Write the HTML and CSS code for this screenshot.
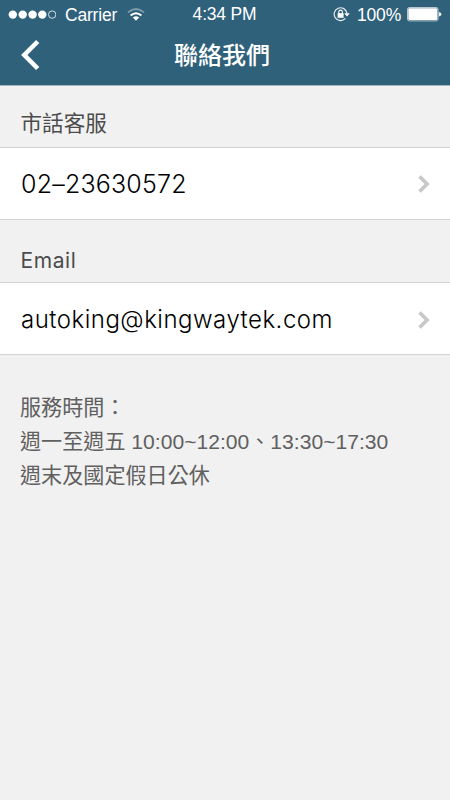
FILE: index.html
```html
<!DOCTYPE html>
<html lang="zh-Hant">
<head>
    <meta charset="UTF-8">
    <meta name="viewport" content="width=device-width, initial-scale=1.0">
    <title>聯絡我們</title>
    <link rel="stylesheet" href="styles.css">
</head>
<body>

    <header class="header">
        <div class="status-bar">
            <div class="status-left">
                <svg class="signal" width="48" height="10" viewBox="0 0 48 10">
                    <g fill="#fff">
                        <circle cx="4.8" cy="4.6" r="4.2"/>
                        <circle cx="14.7" cy="4.6" r="4.2"/>
                        <circle cx="24.6" cy="4.6" r="4.2"/>
                        <circle cx="34.3" cy="4.6" r="4.2"/>
                    </g>
                    <circle cx="44.2" cy="4.6" r="3.7" fill="none" stroke="#e4ebef" stroke-width="0.9"/>
                </svg>
                <span class="carrier">Carrier</span>
                <svg class="wifi" width="18" height="14" viewBox="0 0 18 14">
                    <path d="M1 4.4Q9-2.4 17 4.4" fill="none" stroke="#7f9eae" stroke-width="1.7"/>
                    <path d="M3.6 7.6Q9 2.8 14.4 7.6" fill="none" stroke="#fff" stroke-width="2"/>
                    <path d="M5.9 9.6Q9 7.1 12.1 9.6L9 12.7Z" fill="#fff"/>
                </svg>
            </div>
            <span class="time">4:34 PM</span>
            <div class="status-right">
                <svg class="lock" width="17" height="15" viewBox="0 0 17 15">
                    <path d="M12.4 11.4A6.4 6.4 0 1 1 13.9 6.2" fill="none" stroke="#e8eef1" stroke-width="1.2"/>
                    <path d="M11.2 6.2H16.8L14 9.6Z" fill="#fff"/>
                    <rect x="4.6" y="6.2" width="6" height="4.6" fill="#fff"/>
                    <path d="M5.8 7V4.9a1.8 1.8 0 0 1 3.6 0V7" fill="none" stroke="#fff" stroke-width="1.1"/>
                </svg>
                <span class="percent">100%</span>
                <svg class="battery" width="36" height="15" viewBox="0 0 36 15">
                    <rect x="1.5" y="0.5" width="30.5" height="13.4" rx="1.8" fill="none" stroke="#b9c8d1"/>
                    <rect x="2.3" y="1.3" width="29" height="11.8" rx="1" fill="#fff"/>
                    <path d="M32.8 5Q35.4 5.2 35.4 7.2T32.8 9.5Z" fill="#e8eef1"/>
                </svg>
            </div>
        </div>
        <div class="nav-bar">
            <a class="back" href="#">
                <svg width="20" height="32" viewBox="0 0 20 32">
                    <path d="M17.7 2.5L4.3 16L17.7 29.5" fill="none" stroke="#fff" stroke-width="4.6"/>
                </svg>
            </a>
            <h1 class="title">聯絡我們</h1>
        </div>
    </header>

    <main class="content">
        <h2 class="label label-phone">市話客服</h2>
        <a class="row" href="#">
            <span class="phone">02–23630572</span>
            <svg class="arrow" width="12" height="18" viewBox="0 0 12 18">
                <path d="M1.6 1.5L9 9L1.6 16.5" fill="none" stroke="#c8c8c8" stroke-width="3.8"/>
            </svg>
        </a>
        <h2 class="label label-email">Email</h2>
        <a class="row row-email" href="#">
            <span class="email">autoking@kingwaytek.com</span>
            <svg class="arrow" width="12" height="18" viewBox="0 0 12 18">
                <path d="M1.6 1.5L9 9L1.6 16.5" fill="none" stroke="#c8c8c8" stroke-width="3.8"/>
            </svg>
        </a>
        <div class="hours">
            <p>服務時間：</p>
            <p>週一至週五 <span class="digits">10:00~12:00</span>、<span class="digits">13:30~17:30</span></p>
            <p>週末及國定假日公休</p>
        </div>
    </main>

</body>
</html>
```
FILE: styles.css
```css
* {
    box-sizing: border-box;
}
body {
    margin: 0;
    min-height: 100vh;
    background-color: #f1f1f1;
    font-family: "Liberation Sans", "Noto Sans CJK TC", sans-serif;
}
a {
    color: inherit;
    text-decoration: none;
}
svg {
    display: block;
    flex-shrink: 0;
}
.header {
    height: 86px;
    background-color: #30617a;
    border-bottom: 1px solid #a4b6c0;
    color: #fff;
}
.status-bar {
    display: grid;
    grid-template-columns: 1fr auto 1fr;
    align-items: center;
    height: 29px;
    padding: 0 8px;
    font-size: 17.5px;
    line-height: 29px;
}
.status-left,
.status-right {
    display: flex;
    align-items: center;
    height: 29px;
}
.status-right {
    justify-content: flex-end;
}
.carrier {
    margin-left: 9px;
    padding-top: 1px;
    letter-spacing: -0.2px;
}
.wifi {
    margin-left: 10px;
}
.time {
    padding-right: 1px;
    letter-spacing: -0.2px;
}
.percent {
    margin: 0 5px 0 7px;
    padding-top: 1px;
    letter-spacing: -0.2px;
}
/* Navigation */
.nav-bar {
    display: grid;
    grid-template-columns: 60px 1fr 60px;
    align-items: center;
    height: 52px;
}
.back {
    padding-left: 20px;
}
.title {
    margin: 0 6px 0 0;
    padding-bottom: 3px;
    font-family: "Noto Sans CJK TC", sans-serif;
    font-size: 24px;
    font-weight: 500;
    line-height: 49px;
    text-align: center;
}
/* Contact list */
.label {
    display: flex;
    align-items: flex-end;
    margin: 0;
    padding-left: 20.5px;
    color: #4c4c4c;
    font-weight: 400;
}
.label-phone {
    height: 61px;
    padding-bottom: 7px;
    font-size: 21.6px;
    line-height: 32px;
}
.label-email {
    height: 62px;
    padding-bottom: 5px;
    font-family: Inter, sans-serif;
    font-size: 21px;
    line-height: 32px;
    letter-spacing: 0.6px;
}
.row {
    display: flex;
    align-items: center;
    justify-content: space-between;
    height: 73px;
    padding: 0 20px 0 21px;
    background-color: #fff;
    border-top: 1px solid #d3d3d3;
    border-bottom: 1px solid #d3d3d3;
    color: #000;
    line-height: 40px;
}
.row-email {
    padding-top: 2px;
}
.phone {
    font-family: Inter, sans-serif;
    font-size: 25px;
    font-weight: 300;
    letter-spacing: 0.2px;
}
.email {
    font-family: Inter, sans-serif;
    font-size: 24px;
    font-weight: 300;
    letter-spacing: 0.5px;
}
.hours {
    padding: 36px 20px 0;
    color: #606060;
    font-size: 21.1px;
    line-height: 34px;
}
.hours p {
    margin: 0;
}
```
